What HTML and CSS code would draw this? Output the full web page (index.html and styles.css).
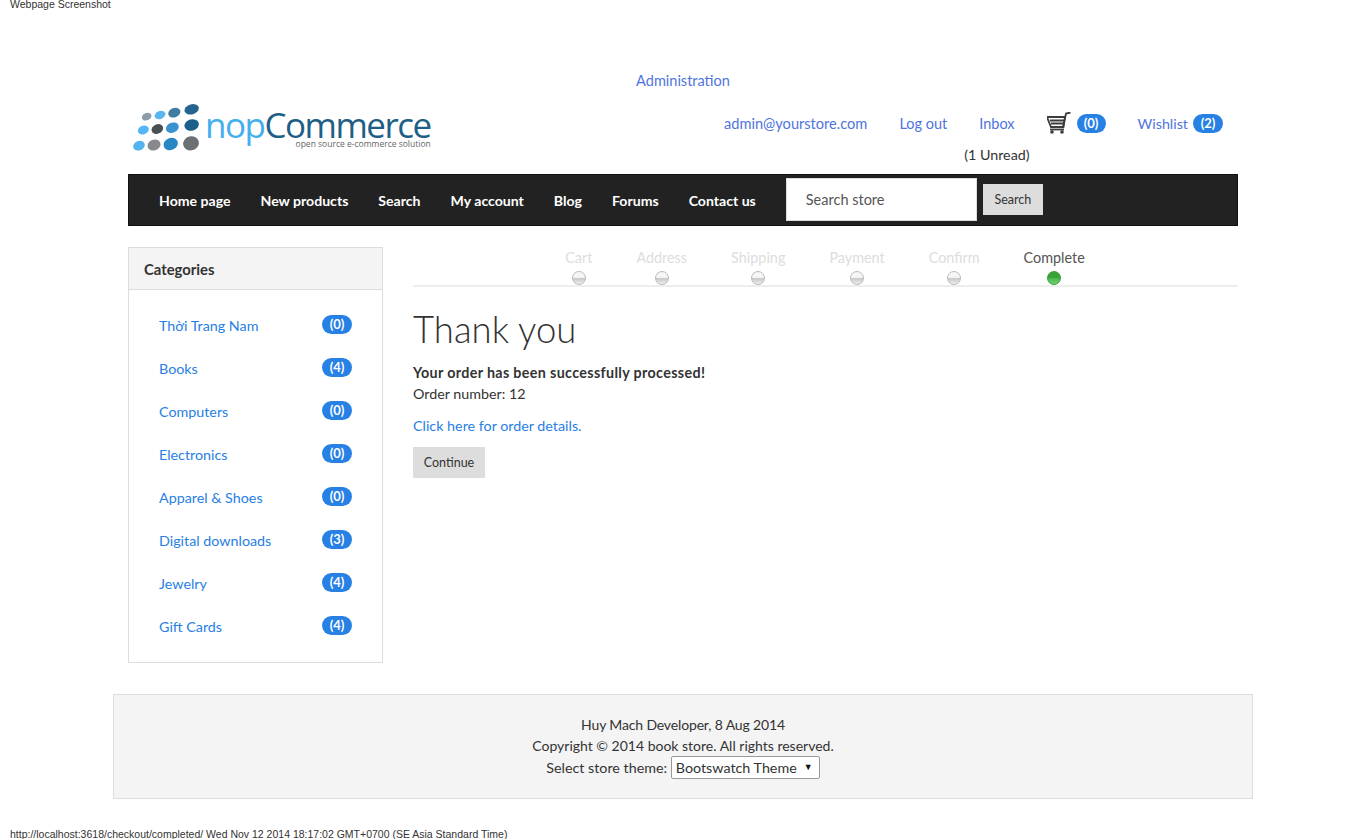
FILE: index.html
```html
<!DOCTYPE html>
<html lang="en">
<head>
    <meta charset="UTF-8">
    <meta name="viewport" content="width=device-width, initial-scale=1.0">
    <title>Thank you</title>
    <link rel="stylesheet" href="styles.css">
</head>
<body>
    <div class="print-head">Webpage Screenshot</div>

    <div class="page">
        <div class="admin-row"><a href="#">Administration</a></div>

        <!-- Logo and account links -->
        <header class="header">
            <a class="logo" href="#">
                <svg class="logo-dots" viewBox="0 0 225 168" width="75" height="56">
                    <ellipse cx="50" cy="50" rx="15" ry="11" fill="#8c9ca8" transform="rotate(-22 50 50)"/>
                    <ellipse cx="90" cy="45" rx="17" ry="12" fill="#5bb6f0" transform="rotate(-22 90 45)"/>
                    <ellipse cx="133" cy="38" rx="19" ry="14" fill="#3f7c9f" transform="rotate(-22 133 38)"/>
                    <ellipse cx="185" cy="28" rx="22" ry="15" fill="#24658f" transform="rotate(-16 185 28)"/>
                    <ellipse cx="40" cy="90" rx="17" ry="13" fill="#55b7f5" transform="rotate(-22 40 90)"/>
                    <ellipse cx="82" cy="87" rx="18" ry="14" fill="#4a4f55" transform="rotate(-22 82 87)"/>
                    <ellipse cx="127" cy="83" rx="20" ry="15" fill="#3a93cf" transform="rotate(-22 127 83)"/>
                    <ellipse cx="185" cy="75" rx="22" ry="17" fill="#1c5f8c" transform="rotate(-16 185 75)"/>
                    <ellipse cx="27" cy="137" rx="18" ry="14" fill="#55b4ee" transform="rotate(-22 27 137)"/>
                    <ellipse cx="72" cy="135" rx="20" ry="16" fill="#87898c" transform="rotate(-22 72 135)"/>
                    <ellipse cx="122" cy="132" rx="22" ry="18" fill="#2787c5" transform="rotate(-22 122 132)"/>
                    <ellipse cx="183" cy="130" rx="24" ry="21" fill="#6d7072" transform="rotate(-16 183 130)"/>
                </svg>
                <span class="logo-text">
                    <span class="logo-name"><span class="logo-nop">nop</span>Commerce</span>
                    <span class="logo-tag">open source e-commerce solution</span>
                </span>
            </a>

            <div class="header-links">
                <a class="email-link" href="#">admin@yourstore.com</a>
                <a href="#">Log out</a>
                <a href="#">Inbox</a>
                <a class="cart-link" href="#">
                    <svg viewBox="0 0 24 22" width="24" height="22" fill="none" stroke="#3c3c3c" stroke-width="1.800">
                        <path d="M0 5h18l-1.500 10H4z"/>
                        <path d="M3 8.500h14M4 11.500h12"/>
                        <path d="M16 15l3-13.500 4.500-1"/>
                        <path d="M3 17.500h14"/>
                        <circle cx="5" cy="20" r="1.800" fill="#3c3c3c" stroke="none"/>
                        <circle cx="15" cy="20" r="1.800" fill="#3c3c3c" stroke="none"/>
                    </svg>
                    <span class="badge">(0)</span>
                </a>
                <a class="wish-link" href="#">Wishlist <span class="badge">(2)</span></a>
                <span class="unread">(1 Unread)</span>
            </div>
        </header>

        <!-- Menu -->
        <nav class="nav">
            <a href="#">Home page</a>
            <a href="#">New products</a>
            <a href="#">Search</a>
            <a href="#">My account</a>
            <a href="#">Blog</a>
            <a href="#">Forums</a>
            <a href="#">Contact us</a>
            <input class="search-input" type="text" placeholder="Search store">
            <button class="btn search-btn" type="button">Search</button>
        </nav>

        <div class="columns">
            <aside class="sidebar">
                <div class="sidebar-title">Categories</div>
                <ul class="cat-list">
                    <li><a href="#">Thời Trang Nam</a><span class="badge">(0)</span></li>
                    <li><a href="#">Books</a><span class="badge">(4)</span></li>
                    <li><a href="#">Computers</a><span class="badge">(0)</span></li>
                    <li><a href="#">Electronics</a><span class="badge">(0)</span></li>
                    <li><a href="#">Apparel &amp; Shoes</a><span class="badge">(0)</span></li>
                    <li><a href="#">Digital downloads</a><span class="badge">(3)</span></li>
                    <li><a href="#">Jewelry</a><span class="badge">(4)</span></li>
                    <li><a href="#">Gift Cards</a><span class="badge">(4)</span></li>
                </ul>
            </aside>

            <main class="main">
                <ol class="steps">
                    <li>Cart</li>
                    <li>Address</li>
                    <li>Shipping</li>
                    <li>Payment</li>
                    <li>Confirm</li>
                    <li class="active">Complete</li>
                </ol>
                <h1>Thank you</h1>
                <p class="order-ok">Your order has been successfully processed!</p>
                <p class="order-num">Order number: 12</p>
                <p class="order-link"><a href="#">Click here for order details.</a></p>
                <button class="btn continue-btn" type="button">Continue</button>
            </main>
        </div>
    </div>

    <footer class="footer">
        <div class="footer-date">Huy Mach Developer, 8 Aug 2014</div>
        <div>Copyright © 2014 book store. All rights reserved.</div>
        <div class="theme-row">
            Select store theme:
            <span class="select-wrap">
                <select>
                    <option>Bootswatch Theme</option>
                </select>
            </span>
        </div>
    </footer>

    <div class="print-foot">http://localhost:3618/checkout/completed/ Wed Nov 12 2014 18:17:02 GMT+0700 (SE Asia Standard Time)</div>
</body>
</html>
```

FILE: styles.css
```css
html {
    overflow: hidden;
}
body {
    margin: 0;
    font-family: Lato, "Noto Sans", sans-serif;
    font-size: 14.3px;
    color: #333;
    background-color: #fff;
}
a {
    color: #2780e3;
    text-decoration: none;
}
.print-head,
.print-foot {
    font-family: "Liberation Sans", Arial, sans-serif;
    font-size: 10.5px;
    color: #333;
    padding-left: 10px;
}
.print-head {
    height: 10px;
    line-height: 9px;
}
.print-foot {
    margin-top: 29px;
    line-height: 12px;
}
.page {
    width: 1110px;
    margin-left: 128px;
}
.admin-row {
    margin-top: 61px;
    line-height: 20px;
    text-align: center;
    font-size: 14.5px;
}
.admin-row a,
.header-links a {
    color: #4f74dd;
}
.header {
    display: flex;
    justify-content: space-between;
    height: 83px;
}
.logo {
    display: flex;
    margin: 9px 0 0 2px;
    height: 56px;
}
.logo-text {
    display: flex;
    flex-direction: column;
    align-items: flex-end;
    margin-top: 10px;
}
.logo-name {
    font-family: "Open Sans", sans-serif;
    font-size: 35px;
    letter-spacing: -1.5px;
    line-height: 30px;
    color: #1f5f86;
}
.logo-nop {
    color: #45aeee;
}
.logo-tag {
    font-family: "Open Sans", sans-serif;
    font-size: 8.5px;
    line-height: 8px;
    color: #666;
}
.header-links {
    display: grid;
    grid-template-columns: repeat(5, auto);
    grid-template-rows: 20px 20px;
    column-gap: 32px;
    row-gap: 11px;
    margin: 22px 15px 0 0;
    align-items: center;
    font-size: 14.5px;
}
.email-link {
    font-size: 14.6px;
}
.cart-link {
    display: flex;
    align-items: center;
    gap: 6px;
}
.cart-link .badge {
    min-width: 29px;
}
.wish-link {
    display: flex;
    align-items: center;
    gap: 5px;
    font-size: 14.3px;
}
.unread {
    grid-column: 3;
    justify-self: center;
    width: 0;
    display: flex;
    justify-content: center;
    white-space: nowrap;
    font-size: 14.3px;
}
.badge {
    display: inline-block;
    min-width: 30px;
    box-sizing: border-box;
    height: 19px;
    line-height: 19px;
    border-radius: 10px;
    background-color: #2780e3;
    color: #fff;
    font-size: 13px;
    font-weight: bold;
    text-align: center;
}
.nav {
    display: flex;
    align-items: center;
    height: 52px;
    padding-left: 30px;
    background-color: #222;
    border: 1px solid #111;
    box-sizing: border-box;
}
.nav a {
    color: #fff;
    font-weight: bold;
    margin-right: 30px;
    font-size: 14.1px;
}
.search-input {
    width: 191px;
    height: 43px;
    box-sizing: border-box;
    padding: 0 19px;
    margin: -2px 0 0 0;
    border: 1px solid #ddd;
    font-family: inherit;
    font-size: 14.5px;
}
.search-input::placeholder {
    color: #555;
}
.btn {
    border: none;
    background-color: #ddd;
    color: #333;
    font-family: inherit;
    font-size: 12.5px;
}
.search-btn {
    width: 60px;
    height: 31px;
    margin: -2px 0 0 6px;
}
.columns {
    display: flex;
    gap: 30px;
    margin-top: 21px;
}
.sidebar {
    width: 255px;
    box-sizing: border-box;
    border: 1px solid #ddd;
}
.sidebar-title {
    height: 41px;
    line-height: 43px;
    padding-left: 15px;
    background-color: #f4f4f4;
    border-bottom: 1px solid #ddd;
    font-weight: bold;
    font-size: 14.8px;
}
.cat-list {
    list-style: none;
    margin: 0;
    padding: 14px 30px 14px 30px;
}
.cat-list li {
    display: flex;
    justify-content: space-between;
    align-items: center;
    height: 43px;
}
.cat-list .badge {
    margin-top: -2px;
}
.main {
    flex: 1;
}
.steps {
    display: flex;
    justify-content: center;
    gap: 44px;
    list-style: none;
    margin: 0;
    padding: 0 1px 0 0;
    height: 38px;
    border-bottom: 2px solid #eee;
    font-size: 14.4px;
}
.steps li {
    display: flex;
    flex-direction: column;
    align-items: center;
    color: #ddd;
    line-height: 20px;
    height: 38px;
    margin-top: 1px;
}
.steps li::after {
    content: "";
    width: 12px;
    height: 12px;
    margin-top: 3px;
    border-radius: 50%;
    border: 1px solid #bbb;
    background: linear-gradient(#f6f6f6 45%, #c8c8c8 55%, #eee);
}
.steps li.active {
    color: #555;
}
.steps li.active::after {
    border-color: #3a9a3a;
    background: linear-gradient(#37a337 45%, #4cb84c 55%, #6fd06f);
}
h1 {
    margin: 22px 0 0;
    font-size: 36.5px;
    font-weight: 300;
    line-height: 40px;
    color: #333;
}
.main p {
    margin: 0;
    line-height: 21px;
}
.main .order-ok {
    margin-top: 13px;
    font-weight: bold;
    letter-spacing: 0.35px;
}
.main .order-link {
    margin-top: 11px;
}
.continue-btn {
    display: block;
    width: 72px;
    height: 31px;
    margin-top: 11px;
}
.footer {
    width: 1140px;
    height: 105px;
    box-sizing: border-box;
    margin: 31px 0 0 113px;
    padding-top: 19px;
    background-color: #f4f4f4;
    border: 1px solid #ddd;
    text-align: center;
    line-height: 21px;
    font-size: 14px;
}
.footer-date {
    letter-spacing: -0.15px;
}
.theme-row {
    font-size: 14.3px;
}
.select-wrap {
    position: relative;
    display: inline-block;
}
.select-wrap::after {
    content: "▼";
    position: absolute;
    right: 7px;
    top: 0;
    font-size: 9px;
    color: #111;
    pointer-events: none;
}
.theme-row select {
    appearance: none;
    width: 149px;
    height: 23px;
    padding: 0 0 0 4px;
    font-family: inherit;
    font-size: 14.3px;
    color: #333;
    background-color: #fff;
    border: 1px solid #999;
    border-radius: 2px;
}
```
